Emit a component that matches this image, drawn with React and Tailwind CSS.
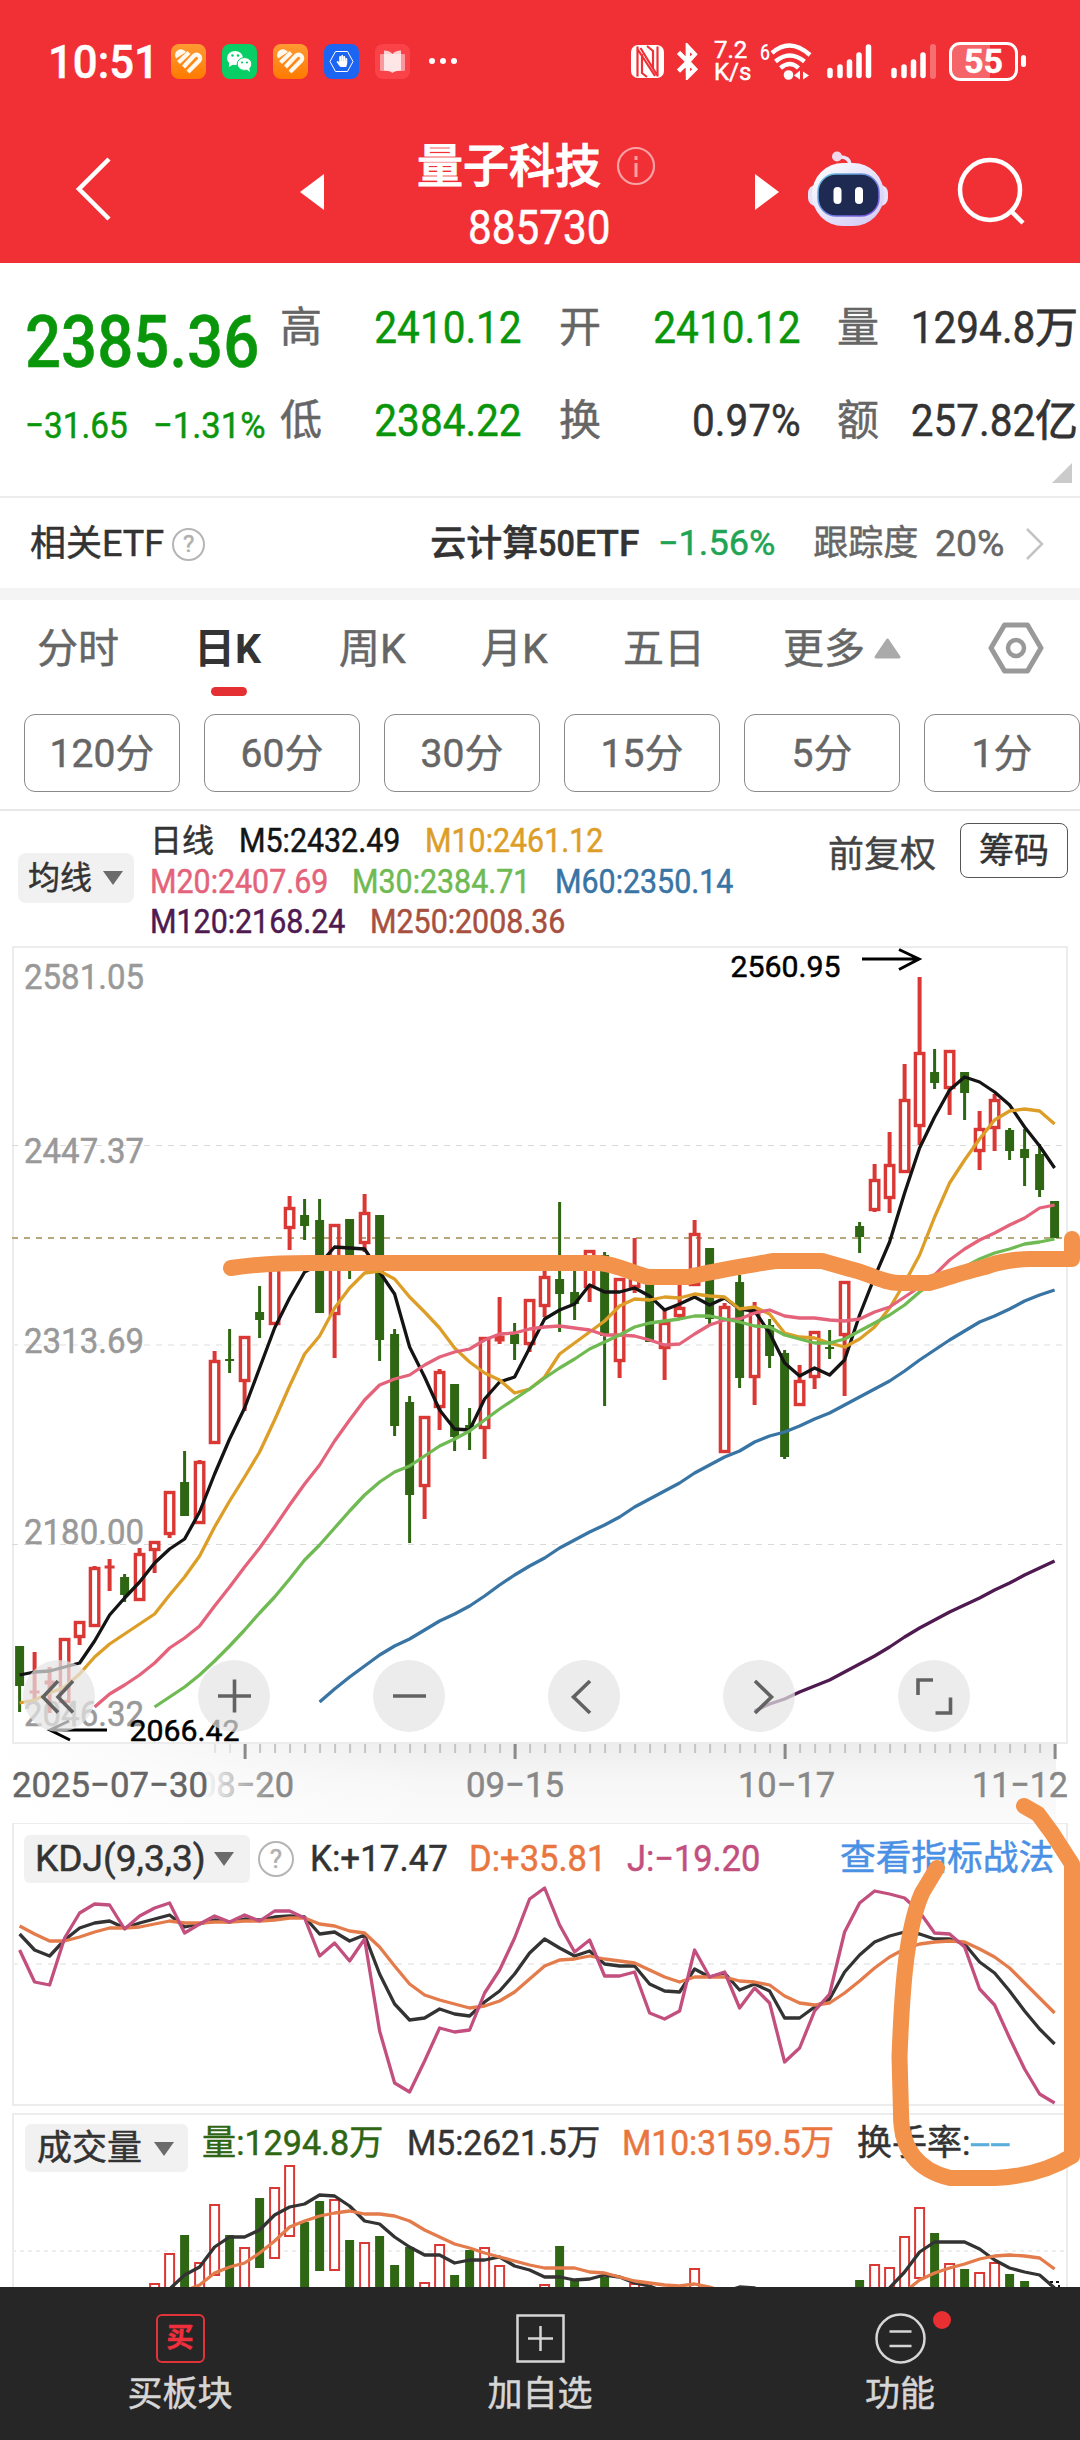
import { FaBluetoothB, FaHandPaper } from "react-icons/fa";

const FONT = "font-[Roboto,'Noto_Sans_CJK_SC',sans-serif]";
const RED = "#d93835";
const GREEN = "#2f6614";

const xAt = (index) => 19.6 + index * 15;

// [direction, body top, body bottom, high, low]
const candles = [
  ["d", 1646, 1686, 1646, 1712],
  ["u", 1691, 1693, 1652, 1700],
  ["u", 1681, 1684, 1667, 1713],
  ["u", 1638, 1703, 1638, 1703],
  ["u", 1621, 1638, 1621, 1645],
  ["u", 1567, 1627, 1566, 1627],
  ["u", 1566, 1568, 1559, 1591],
  ["d", 1577, 1595, 1574, 1602],
  ["u", 1553, 1601, 1548, 1601],
  ["u", 1541, 1551, 1541, 1573],
  ["u", 1491, 1535, 1491, 1538],
  ["d", 1482, 1516, 1451, 1516],
  ["u", 1461, 1524, 1460, 1524],
  ["u", 1360, 1444, 1351, 1444],
  ["d", 1359, 1361, 1329, 1373],
  ["u", 1336, 1382, 1336, 1411],
  ["d", 1312, 1320, 1286, 1338],
  ["u", 1268, 1325, 1268, 1325],
  ["u", 1207, 1229, 1196, 1250],
  ["d", 1215, 1226, 1199, 1240],
  ["d", 1220, 1313, 1199, 1313],
  ["u", 1224, 1315, 1224, 1358],
  ["d", 1219, 1268, 1219, 1279],
  ["u", 1212, 1244, 1194, 1252],
  ["d", 1215, 1340, 1215, 1361],
  ["d", 1334, 1426, 1329, 1436],
  ["d", 1402, 1495, 1396, 1543],
  ["u", 1416, 1487, 1416, 1519],
  ["u", 1371, 1408, 1369, 1430],
  ["d", 1384, 1437, 1384, 1451],
  ["d", 1425, 1428, 1408, 1450],
  ["u", 1337, 1429, 1337, 1459],
  ["u", 1336, 1341, 1297, 1344],
  ["d", 1334, 1344, 1323, 1360],
  ["u", 1299, 1345, 1299, 1352],
  ["u", 1276, 1307, 1265, 1317],
  ["d", 1279, 1294, 1202, 1332],
  ["d", 1292, 1304, 1265, 1320],
  ["u", 1250, 1288, 1250, 1302],
  ["d", 1255, 1336, 1252, 1406],
  ["u", 1278, 1362, 1278, 1378],
  ["u", 1270, 1288, 1238, 1293],
  ["d", 1275, 1342, 1275, 1342],
  ["u", 1322, 1349, 1310, 1380],
  ["u", 1307, 1317, 1285, 1318],
  ["u", 1233, 1286, 1220, 1286],
  ["d", 1248, 1319, 1248, 1326],
  ["u", 1306, 1453, 1303, 1453],
  ["d", 1282, 1378, 1275, 1388],
  ["u", 1310, 1378, 1302, 1405],
  ["d", 1325, 1356, 1319, 1368],
  ["d", 1353, 1457, 1350, 1459],
  ["u", 1380, 1406, 1365, 1406],
  ["u", 1331, 1378, 1331, 1389],
  ["d", 1347, 1349, 1330, 1359],
  ["u", 1281, 1336, 1281, 1396],
  ["d", 1226, 1237, 1222, 1253],
  ["u", 1179, 1211, 1164, 1212],
  ["u", 1164, 1199, 1132, 1213],
  ["u", 1099, 1173, 1064, 1173],
  ["u", 1052, 1127, 977, 1145],
  ["d", 1072, 1083, 1049, 1089],
  ["u", 1050, 1089, 1050, 1115],
  ["d", 1072, 1093, 1072, 1120],
  ["u", 1128, 1152, 1111, 1170],
  ["u", 1099, 1129, 1094, 1151],
  ["d", 1130, 1151, 1128, 1160],
  ["d", 1149, 1158, 1129, 1186],
  ["d", 1154, 1190, 1144, 1197],
  ["d", 1201, 1238, 1201, 1238],
];

const averages = [
  {
    color: "#3874a4",
    start: 20,
    values: [
      1702, 1689, 1677, 1666, 1655, 1646, 1639, 1630, 1621, 1614, 1606, 1596,
      1585, 1575, 1566, 1558, 1548, 1540, 1532, 1525, 1517, 1507, 1499, 1491,
      1483, 1473, 1465, 1457, 1451, 1442, 1436, 1432, 1426, 1419, 1413, 1405,
      1397, 1389, 1381, 1371, 1360, 1350, 1340, 1331, 1322, 1316, 1309, 1301,
      1295, 1290,
    ],
  },
  {
    color: "#4e1a50",
    start: 49,
    values: [
      1711, 1704, 1699, 1692, 1686, 1680, 1672, 1664, 1656, 1647, 1637, 1628,
      1620, 1612, 1605, 1598, 1590, 1583, 1575, 1568, 1561,
    ],
  },
  {
    color: "#141414",
    start: 0,
    values: [
      1675, 1672, 1671, 1667, 1663, 1641, 1615, 1598, 1582, 1563, 1549, 1539,
      1512, 1474, 1439, 1408, 1368, 1328, 1298, 1272, 1264, 1247, 1248, 1249,
      1272, 1294, 1347, 1377, 1410, 1429, 1430, 1399, 1382, 1377, 1348, 1319,
      1310, 1304, 1285, 1292, 1292, 1288, 1296, 1310, 1304, 1297, 1305, 1298,
      1309, 1311, 1333, 1363, 1376, 1368, 1375, 1360, 1315, 1277, 1242, 1193,
      1148, 1117, 1090, 1077, 1082, 1092, 1105, 1127, 1146, 1168,
    ],
  },
  {
    color: "#dd9e28",
    start: 0,
    values: [
      1703, 1700, 1693, 1687, 1674, 1657, 1644, 1634, 1624, 1614, 1595, 1577,
      1556, 1527, 1501, 1477, 1452, 1420, 1386, 1354, 1336, 1308, 1288, 1273,
      1271, 1279, 1297, 1312, 1328, 1348, 1362, 1373, 1380, 1393, 1389, 1377,
      1354, 1343, 1332, 1321, 1306, 1299, 1300, 1297, 1298, 1294, 1296, 1297,
      1309, 1307, 1314, 1333, 1337, 1338, 1343, 1347, 1339, 1327, 1308, 1283,
      1255, 1217, 1183, 1160, 1139, 1120, 1111, 1109, 1111, 1124,
    ],
  },
  {
    color: "#e4637a",
    start: 5,
    values: [
      1707, 1694, 1685, 1675, 1663, 1648, 1638, 1626, 1606, 1587, 1567, 1548,
      1527, 1505, 1484, 1465, 1441, 1420, 1400, 1385, 1379, 1375, 1365, 1357,
      1352, 1349, 1340, 1334, 1333, 1329, 1327, 1326, 1328, 1330, 1335, 1335,
      1336, 1340, 1345, 1344, 1334, 1325, 1320, 1319, 1313, 1310, 1316, 1318,
      1318, 1320, 1321, 1319, 1312, 1307, 1297, 1287, 1275, 1260, 1249, 1240,
      1233, 1225, 1218, 1208, 1205,
    ],
  },
  {
    color: "#6fba52",
    start: 9,
    values: [
      1707, 1697, 1687, 1675, 1661, 1646, 1630, 1613, 1597, 1579, 1560, 1545,
      1528, 1511, 1495, 1482, 1472, 1466, 1456, 1446, 1439, 1431, 1420, 1409,
      1399, 1389, 1378, 1368, 1359, 1349, 1342, 1335, 1327, 1323, 1321, 1319,
      1316, 1316, 1319, 1322, 1326, 1327, 1335, 1339, 1343, 1343, 1339, 1331,
      1323, 1315, 1305, 1292, 1282, 1273, 1267, 1259, 1253, 1249, 1244, 1242,
      1239,
    ],
  },
];

const kdjLines = [
  {
    color: "#333333",
    start: 0,
    values: [
      1934, 1950, 1956, 1940, 1928, 1923, 1921, 1928, 1923, 1919, 1915, 1927,
      1924, 1920, 1922, 1919, 1920, 1917, 1916, 1917, 1934, 1932, 1941, 1935,
      1974, 2004, 2020, 2018, 2009, 2014, 2016, 2002, 1991, 1974, 1953, 1939,
      1948, 1956, 1951, 1964, 1966, 1966, 1984, 1991, 1992, 1969, 1977, 1973,
      1990, 1984, 1991, 2018, 2018, 2007, 1999, 1972, 1955, 1942, 1936, 1932,
      1934, 1939, 1939, 1944, 1962, 1973, 1991, 2011, 2029, 2044,
    ],
  },
  {
    color: "#e47b4b",
    start: 0,
    values: [
      1926, 1934, 1941, 1941, 1937, 1932, 1928, 1928, 1927, 1924, 1921, 1923,
      1923, 1922, 1922, 1921, 1921, 1920, 1918, 1918, 1924, 1926, 1931, 1933,
      1947, 1966, 1984, 1995, 2000, 2004, 2008, 2006, 2001, 1992, 1979, 1966,
      1960, 1959, 1956, 1959, 1961, 1963, 1970, 1977, 1982, 1977, 1977, 1977,
      1981, 1982, 1985, 1996, 2003, 2005, 2003, 1993, 1981, 1968, 1957, 1949,
      1944, 1942, 1941, 1942, 1949, 1957, 1968, 1983, 1998, 2013,
    ],
  },
  {
    color: "#c34f7f",
    start: 0,
    values: [
      1950, 1982, 1985, 1938, 1913, 1904, 1905, 1929, 1916, 1908, 1903, 1933,
      1924, 1916, 1922, 1915, 1921, 1911, 1911, 1918, 1956, 1943, 1961, 1939,
      2031, 2083, 2092, 2061, 2028, 2032, 2030, 1993, 1970, 1938, 1899, 1888,
      1925, 1952, 1940, 1976, 1976, 1972, 2013, 2019, 2011, 1950, 1977, 1972,
      2008, 1988, 2003, 2062, 2048, 2011, 1994, 1932, 1903, 1891, 1894, 1898,
      1912, 1933, 1934, 1947, 1989, 2005, 2038, 2069, 2094, 2103,
    ],
  },
];

// [index, direction, top]
const volumeBars = [
  [9, "u", 2283],
  [10, "u", 2253],
  [11, "d", 2235],
  [12, "u", 2262],
  [13, "u", 2204],
  [14, "d", 2235],
  [15, "u", 2247],
  [16, "d", 2198],
  [17, "u", 2187],
  [18, "u", 2165],
  [19, "d", 2222],
  [20, "d", 2201],
  [21, "u", 2199],
  [22, "d", 2240],
  [23, "u", 2242],
  [24, "d", 2236],
  [25, "d", 2265],
  [26, "d", 2247],
  [27, "u", 2282],
  [28, "u", 2244],
  [29, "d", 2275],
  [30, "d", 2250],
  [31, "u", 2247],
  [32, "u", 2265],
  [35, "u", 2284],
  [36, "d", 2246],
  [37, "d", 2280],
  [39, "d", 2277],
  [41, "u", 2283],
  [45, "u", 2268],
  [56, "d", 2280],
  [57, "u", 2264],
  [58, "u", 2267],
  [59, "u", 2236],
  [60, "u", 2207],
  [61, "d", 2233],
  [62, "u", 2263],
  [63, "d", 2269],
  [64, "u", 2272],
  [65, "u", 2262],
  [66, "d", 2274],
  [67, "d", 2281],
];

const volumeLines = [
  {
    color: "#333333",
    start: 10,
    values: [
      2289, 2275, 2267, 2247, 2237, 2237, 2230, 2215, 2207, 2204, 2195, 2196,
      2206, 2221, 2224, 2237, 2247, 2255, 2255, 2263, 2260, 2260, 2257, 2266,
      2270, 2277, 2277, 2280, 2279, 2275, 2277, 2283, 2286, 2292, 2296, 2296,
      2296, 2292, 2287, 2288, 2293, 2300, 2304, 2304, 2304, 2304, 2304, 2302,
      2288, 2272, 2252, 2242, 2242, 2242, 2249, 2260, 2268, 2272, 2275, 2288,
    ],
  },
  {
    color: "#e47b4b",
    start: 11,
    values: [
      2291, 2285, 2273, 2267, 2263, 2253, 2241, 2227, 2221, 2216, 2213, 2211,
      2214, 2214, 2216, 2221, 2230, 2237, 2244, 2248, 2253, 2257, 2261, 2265,
      2268, 2268, 2268, 2272, 2273, 2277, 2281, 2283, 2285, 2286, 2284, 2287,
      2292, 2296, 2300, 2300, 2300, 2300, 2300, 2300, 2300, 2300, 2300, 2298,
      2292, 2280, 2273, 2268, 2264, 2259, 2256, 2255, 2256, 2258, 2269,
    ],
  },
];

const periods = ["120分", "60分", "30分", "15分", "5分", "1分"];

const tools = [
  { x: 59, d: "M58 1681l-15 16 15 15.500M73 1681l-15 16 15 15.500" },
  { x: 234, d: "M218 1696h33M234.500 1679.500v33" },
  { x: 409, d: "M393 1696h33" },
  { x: 584, d: "M590 1681l-16.500 16 16.500 16" },
  { x: 759, d: "M755 1681l16.500 16-16.500 16" },
  { x: 934, d: "M933 1680h-15v15M950.500 1697.500v15.500h-15" },
];

function toPoints({ start, values }) {
  return values.map((y, i) => `${xAt(start + i)},${y}`).join(" ");
}

function Din({ children, className = "", right = false, scale = "scale-x-[0.9]" }) {
  return (
    <span
      className={`flex shrink-0 whitespace-nowrap ${right ? "justify-end" : ""} ${className}`}
    >
      <span className={`${scale} ${right ? "origin-right" : "origin-left"}`}>
        {children}
      </span>
    </span>
  );
}

function Lines({ data, width = 3.3 }) {
  return data.map((line) => (
    <polyline
      key={line.color}
      points={toPoints(line)}
      fill="none"
      stroke={line.color}
      strokeWidth={width}
      strokeLinejoin="round"
    />
  ));
}

function Candle({ index, candle }) {
  const [direction, top, bottom, high, low] = candle;
  const x = xAt(index);
  const height = bottom - top;

  if (direction === "d") {
    return (
      <g fill={GREEN}>
        <rect x={x - 1.5} y={high} width="3" height={low - high} />
        <rect x={x - 4.5} y={top} width="9" height={height} />
      </g>
    );
  }

  return (
    <g fill={RED}>
      <rect x={x - 2} y={high} width="4" height={Math.max(top - high, 0)} />
      <rect x={x - 2} y={bottom} width="4" height={Math.max(low - bottom, 0)} />
      {height < 7 ? (
        <rect x={x - 5} y={top - 0.5} width="10" height={height + 1} />
      ) : (
        <rect
          x={x - 4.2}
          y={top + 1.5}
          width="8.4"
          height={height - 3}
          fill="none"
          stroke={RED}
          strokeWidth="3.400"
        />
      )}
    </g>
  );
}

function HeartIcon() {
  return (
    <svg className="size-[35px] shrink-0" viewBox="0 0 35 35">
      <defs>
        <linearGradient id="heart" x1="0" y1="0" x2="0" y2="1">
          <stop offset="0" stopColor="#ff9a33" />
          <stop offset="1" stopColor="#ff7a00" />
        </linearGradient>
      </defs>
      <rect width="35" height="35" rx="8" fill="url(#heart)" />
      <path d="M5 14.500a5.800 5.800 0 0 1 10-6.500z" fill="#fff8ef" />
      <g fill="none" stroke="#fff8ef" strokeWidth="4.200">
        <path d="M7.500 18.500L18 8.500" />
        <path d="M12.500 23L23 11.800a3.600 3.600 0 0 1 5.200 5L17 28" />
      </g>
    </svg>
  );
}

function StatusBar() {
  return (
    <div className="flex h-[122px] items-center pl-[48px]">
      <Din className="w-[123px] text-[47px] leading-none font-medium" scale="scale-x-[0.93]">
        10:51
      </Din>
      <div className="flex items-center gap-4">
        <HeartIcon />
        <svg className="size-[35px]" viewBox="0 0 35 35">
          <rect width="35" height="35" rx="8" fill="#07cf66" />
          <ellipse cx="13" cy="14" rx="8" ry="7" fill="#fff" />
          <path d="M7 18l0 5 5-3z" fill="#fff" />
          <ellipse cx="22.500" cy="20" rx="7.300" ry="6.400" fill="#fff" stroke="#07cf66" />
          <path d="M24 25l4 3-1-5z" fill="#fff" />
          <g fill="#07cf66">
            <circle cx="10.500" cy="11.500" r="1.300" />
            <circle cx="16" cy="11.500" r="1.300" />
            <circle cx="20" cy="18.500" r="1.100" />
            <circle cx="25" cy="18.500" r="1.100" />
          </g>
        </svg>
        <HeartIcon />
        <div className="relative flex size-[35px] items-center justify-center rounded-lg bg-[#1c65f2]">
          <svg className="absolute inset-0" viewBox="0 0 35 35">
            <path
              d="M11.500 7.500h12l5.500 10-5.500 10h-12L6 17.500z"
              fill="none"
              stroke="#fff"
            />
          </svg>
          <FaHandPaper className="size-[12px]" />
        </div>
        <svg className="size-[35px]" viewBox="0 0 35 35">
          <rect width="35" height="35" rx="8" fill="#fa4249" />
          <rect x="5" y="10" width="25" height="17" rx="1" fill="#fff" opacity="0.45" />
          <path d="M9 6.500q6 0 8.500 3.500 2.500-3.500 8.500-3.500v20q-6 0-8.500 2.500-2.500-2.500-8.500-2.500z" fill="#fff" opacity="0.75" />
        </svg>
      </div>
      <div className="ml-[19px] flex gap-[5px]">
        <i className="size-1.5 rounded-full bg-white" />
        <i className="size-1.5 rounded-full bg-white" />
        <i className="size-1.5 rounded-full bg-white" />
      </div>

      <svg className="ml-[174px] h-[33px] w-[33px] shrink-0" viewBox="0 0 33 33">
        <rect width="33" height="33" rx="7" fill="#fff" />
        <path
          d="M6.500 1.500v30M26.500 1.500v30M6.500 4L24 31M9.500 3L26 30M11 9v19l5 4M22 24V6l-6-5"
          fill="none"
          stroke="#f13036"
          strokeWidth="2.200"
        />
      </svg>
      <FaBluetoothB className="ml-[9px] h-[37px] w-[29px] shrink-0 stroke-white stroke-[18px]" />
      <div className="ml-[12px] w-[46px] shrink-0 text-[24px] leading-[22px] whitespace-nowrap">
        <p>7.2</p>
        <p>K/s</p>
      </div>
      <svg className="h-[40px] w-[52px] shrink-0 overflow-visible" viewBox="0 0 52 40">
        <text x="0" y="19" fontSize="22" fontWeight="500" fill="#fff" textLength="10" lengthAdjust="spacingAndGlyphs">
          6
        </text>
        <g fill="none" stroke="#fff" strokeWidth="4.400">
          <path d="M12 12q18-16 38 2" />
          <path d="M15.500 20.500q14-12 29 0" />
          <path d="M20.500 27q9.500-8 18 0" />
        </g>
        <circle cx="28.500" cy="34" r="4.800" fill="#fff" />
        <path d="M40 29.500v9l-6-4zM43 30.500l6 4-6 4z" fill="#fff" />
      </svg>
      <svg className="ml-[10px] h-[36px] w-[110px] shrink-0" viewBox="0 0 110 36">
        <g stroke="#fff" strokeWidth="5.500" strokeLinecap="round">
          <path d="M8 27.500v5M18 24v8.500M27.500 19v13.500M37 12v20.500M46.500 4v28.500" />
          <path d="M72 27.500v5M82 24v8.500M91.500 19v13.500M101 12v20.500" />
        </g>
      </svg>
      <i className="-ml-[2px] h-[35px] w-[6px] shrink-0 rounded-full bg-white/30" />
      <div className="ml-[13px] flex h-[39px] w-[69px] shrink-0 items-center justify-center rounded-[11px] border-[3px] border-white bg-linear-to-r from-white/25 from-60% to-transparent to-60% text-[34px] leading-none font-bold">
        55
      </div>
      <i className="ml-[3px] h-3 w-[5px] shrink-0 rounded-full bg-white" />
    </div>
  );
}

function Robot() {
  return (
    <svg className="h-[78px] w-[84px]" viewBox="0 0 84 78">
      <defs>
        <linearGradient id="shell" x1="0" y1="0" x2="1" y2="1">
          <stop offset="0" stopColor="#ffffff" />
          <stop offset="1" stopColor="#cfc8f5" />
        </linearGradient>
        <linearGradient id="rim" x1="0" y1="0" x2="1" y2="1">
          <stop offset="0" stopColor="#65c4dc" />
          <stop offset="1" stopColor="#7b4be0" />
        </linearGradient>
      </defs>
      <rect x="2" y="35" width="80" height="21" rx="8" fill="#e7e2fa" />
      <path d="M32 7q12-1 12 9" fill="none" stroke="#ece4fa" strokeWidth="3.500" />
      <circle cx="31" cy="6.500" r="5" fill="#f0d8ea" />
      <rect x="6" y="13" width="72" height="63" rx="31" fill="url(#shell)" />
      <rect x="12" y="24" width="61" height="42" rx="18" fill="#1e2a52" stroke="url(#rim)" strokeWidth="1.500" />
      <rect x="27.500" y="37" width="8" height="17" rx="4" fill="#fff" />
      <rect x="49" y="37" width="8" height="17" rx="4" fill="#fff" />
    </svg>
  );
}

function TopBar() {
  return (
    <div className="flex h-[141px] items-start">
      <svg className="mt-[34px] ml-[74px] h-[66px] w-[40px]" viewBox="0 0 40 66">
        <path d="M35 3L5 33l30 30" fill="none" stroke="#fff" strokeWidth="4.500" />
      </svg>
      <svg className="mt-[52px] ml-[186px] h-[36px] w-[24px]" viewBox="0 0 24 36">
        <path d="M24 0v36L0 18z" fill="#fff" />
      </svg>
      <div className="ml-[93px] w-[326px] pt-[18px]">
        <div className="flex items-center">
          <h1 className="text-[46px] leading-[52px] font-medium [-webkit-text-stroke:1px]">量子科技</h1>
          <svg className="ml-[15px] size-[40px]" viewBox="0 0 40 40" stroke="#fff" fill="none" opacity="0.55">
            <circle cx="20" cy="20" r="18" strokeWidth="2.200" />
            <path d="M20 17v14M20 10v4" strokeWidth="3" />
          </svg>
        </div>
        <Din className="mt-[10px] ml-[51px] w-[142px] text-[48px] leading-[52px]" scale="scale-x-[0.88]">
          885730
        </Din>
      </div>
      <svg className="mt-[52px] ml-[12px] h-[36px] w-[24px]" viewBox="0 0 24 36">
        <path d="M0 0v36l24-18z" fill="#fff" />
      </svg>
      <div className="mt-[28px] ml-[27px]">
        <Robot />
      </div>
      <svg className="mt-[34px] ml-[66px] size-[70px]" viewBox="0 0 70 70" fill="none" stroke="#fff" strokeWidth="4.500">
        <circle cx="34" cy="34" r="30" />
        <path d="M55 55l12 12" />
      </svg>
    </div>
  );
}

function QuoteCell({ label, value, unit, tone = "", labelClass = "", valueClass }) {
  return (
    <div className="flex items-center">
      <span className={`text-[42px] leading-[60px] text-[#666] ${labelClass}`}>
        {label}
      </span>
      <Din
        right
        scale="scale-x-[0.9]"
        className={`text-[45px] leading-[60px] ${tone} ${valueClass}`}
      >
        {value}
      </Din>
      {unit && (
        <span className="w-[46px] shrink-0 text-[43px] leading-[60px] text-[#333] [-webkit-text-stroke:0.8px]">
          {unit}
        </span>
      )}
    </div>
  );
}

function QuotePanel() {
  return (
    <section className="relative flex h-[235px] border-b-2 border-[#ececec] text-[#0a960a]">
      <div className="w-[280px] shrink-0 pt-[41px] pl-[25px]">
        <Din className="text-[73px] leading-[76px] font-medium" scale="scale-x-[0.87]">
          2385.36
        </Din>
        <div className="mt-[26px] flex text-[37px] leading-[40px]">
          <Din className="w-[128px]">−31.65</Din>
          <Din scale="scale-x-[0.935]">−1.31%</Din>
        </div>
      </div>
      <div className="shrink-0 pt-[35px]">
        <div className="flex">
          <QuoteCell label="高" value="2410.12" valueClass="w-[200px]" />
          <QuoteCell label="开" value="2410.12" labelClass="pl-[37px]" valueClass="w-[200px]" />
          <QuoteCell label="量" value="1294.8" unit="万" labelClass="pl-[36px]" valueClass="w-[156px]" tone="text-[#333]" />
        </div>
        <div className="mt-[33px] flex">
          <QuoteCell label="低" value="2384.22" valueClass="w-[200px]" />
          <QuoteCell label="换" value="0.97%" labelClass="pl-[37px]" valueClass="w-[200px]" tone="text-[#333]" />
          <QuoteCell label="额" value="257.82" unit="亿" labelClass="pl-[36px]" valueClass="w-[156px]" tone="text-[#333]" />
        </div>
      </div>
      <svg className="absolute right-[8px] bottom-[13px] size-[20px]" viewBox="0 0 20 20">
        <path d="M20 0v20H0z" fill="#cbcbcb" />
      </svg>
    </section>
  );
}

function HelpIcon({ className }) {
  return (
    <span
      className={`flex shrink-0 items-center justify-center rounded-full border-2 border-[#b5b5b5] leading-none text-[#b0b0b0] ${className}`}
    >
      ?
    </span>
  );
}

function EtfRow() {
  return (
    <section className="flex h-[90px] items-center pt-[2px] pl-[30px] text-[36px] text-[#333]">
      <span>相关ETF</span>
      <HelpIcon className="ml-[8px] size-[33px] text-[24px]" />
      <span className="ml-[225px] font-medium">云计算</span>
      <Din className="w-[37px] font-medium" scale="scale-x-[0.9]">50</Din>
      <Din className="w-[65px] font-medium" scale="scale-x-[1.03]">ETF</Din>
      <Din className="ml-[18px] w-[119px] text-[35px] text-[#1fa455]" scale="scale-x-[1.03]">
        −1.56%
      </Din>
      <span className="ml-[36px] text-[35px] text-[#666]">跟踪度</span>
      <Din className="ml-[17px] w-[70px] text-[36px] text-[#666]" scale="scale-x-[1.04]">20%</Din>
      <svg className="ml-[20px] h-[32px] w-[20px]" viewBox="0 0 20 32">
        <path d="M2 1l15 15L2 31" fill="none" stroke="#c4c4c4" strokeWidth="2.500" />
      </svg>
    </section>
  );
}

function ChartTabs() {
  return (
    <nav className="flex h-[98px] pt-[19px] pl-[37px] text-[41px] leading-[60px] whitespace-nowrap text-[#666]">
      <span className="w-[157px]">分时</span>
      <div className="w-[145px]">
        <p className="font-bold text-[#333] [-webkit-text-stroke:0]">日K</p>
        <div className="mt-[8px] ml-[17px] h-[9px] w-[36px] rounded-full bg-[#e53033]" />
      </div>
      <span className="w-[142px]">周K</span>
      <span className="w-[142px]">月K</span>
      <span className="w-[160px]">五日</span>
      <span>更多</span>
      <svg className="mt-[19px] ml-[9px] h-[21px] w-[27px]" viewBox="0 0 27 21">
        <path d="M13.500 2L25 19H2z" fill="#aaa" stroke="#aaa" strokeWidth="3" strokeLinejoin="round" />
      </svg>
      <svg className="mt-[2px] ml-[87px] h-[54px] w-[56px]" viewBox="0 0 56 54" fill="none" stroke="#999" strokeWidth="5">
        <path d="M16.500 4h23L53 27 39.500 50h-23L3 27z" strokeLinejoin="round" />
        <circle cx="28" cy="27" r="8" strokeWidth="4.500" />
      </svg>
    </nav>
  );
}

function PeriodRow() {
  return (
    <div className="flex h-[113px] gap-6 border-b-2 border-[#e8e8e8] pt-4 pl-6">
      {periods.map((label) => (
        <button
          key={label}
          type="button"
          className="flex h-[78px] w-[156px] shrink-0 items-center justify-center rounded-[11px] border border-[#8a8a8a] pt-[2px] text-[39px] text-[#666]"
        >
          <span>{label}</span>
        </button>
      ))}
    </div>
  );
}

function Caret({ className = "" }) {
  return (
    <svg className={`h-[14px] w-[20px] shrink-0 ${className}`} viewBox="0 0 20 14">
      <path d="M0 0h20L10 14z" fill="#6b6b6b" />
    </svg>
  );
}

function AverageLegend() {
  return (
    <section className="flex h-[129px] pl-[18px] text-[#333]">
      <button
        type="button"
        className="mt-[42px] flex h-[50px] w-[116px] items-center rounded-lg bg-[#f1f1f1] pl-[10px] text-[32px]"
      >
        均线
        <Caret className="ml-[11px]" />
      </button>
      <div className="w-[677px] pt-[10px] pl-[16px] text-[33px] leading-[40.500px]">
        <div className="flex">
          <span className="w-[89px] text-[32px]">日线</span>
          <Din className="w-[186px] text-[#141414]" scale="scale-x-[0.92]">M5:2432.49</Din>
          <Din className="text-[#dd9e28]" scale="scale-x-[0.92]">M10:2461.12</Din>
        </div>
        <div className="flex">
          <Din className="w-[202px] text-[#e4637a]" scale="scale-x-[0.92]">M20:2407.69</Din>
          <Din className="w-[203px] text-[#6fba52]" scale="scale-x-[0.92]">M30:2384.71</Din>
          <Din className="text-[#3874a4]" scale="scale-x-[0.92]">M60:2350.14</Din>
        </div>
        <div className="flex">
          <Din className="w-[220px] text-[#4e1a50]" scale="scale-x-[0.92]">M120:2168.24</Din>
          <Din className="text-[#a85040]" scale="scale-x-[0.92]">M250:2008.36</Din>
        </div>
      </div>
      <span className="mt-[18px] ml-[17px] w-[132px] text-[36px] leading-[52px] text-[#444]">前复权</span>
      <button
        type="button"
        className="mt-[12px] h-[55px] w-[108px] rounded-lg border-[1.500px] border-[#555] pt-[2px] text-[35px] leading-none"
      >
        筹码
      </button>
    </section>
  );
}

function FitText({ x, y, w, children, size = 35.5, fill = "#999" }) {
  return (
    <text
      x={x}
      y={y}
      fontSize={size}
      fill={fill}
      stroke={fill}
      strokeWidth="0.500"
      textLength={w}
      lengthAdjust="spacingAndGlyphs"
    >
      {children}
    </text>
  );
}

function PriceChart() {
  return (
    <svg className="block h-[883px] w-full" viewBox="0 940 1080 883">
      <defs>
        <linearGradient id="axis" x1="0" y1="0" x2="0" y2="1">
          <stop offset="0" stopColor="#ededed" />
          <stop offset="0.5" stopColor="#f7f7f7" />
          <stop offset="1" stopColor="#fbfbfb" />
        </linearGradient>
        <linearGradient id="fade" gradientUnits="userSpaceOnUse" x1="0" y1="0" x2="440" y2="0">
          <stop offset="0" stopColor="#fff" />
          <stop offset="1" stopColor="#fff" stopOpacity="0" />
        </linearGradient>
        <linearGradient id="date" gradientUnits="userSpaceOnUse" x1="204" y1="0" x2="275" y2="0">
          <stop offset="0" stopColor="#888" stopOpacity="0" />
          <stop offset="1" stopColor="#888" />
        </linearGradient>
      </defs>

      <rect x="0" y="1743" width="1056" height="80" fill="url(#axis)" />
      <rect x="0" y="1743" width="440" height="80" fill="url(#fade)" />
      <rect x="13" y="947" width="1054" height="796" fill="none" stroke="#ececec" strokeWidth="2" />

      <path d="M12 1145.500h1055M12 1544.500h1055" stroke="#d9d9d9" strokeDasharray="6 6" />
      <path d="M12 1345h1055" stroke="#eee" strokeWidth="2" strokeDasharray="6 6" />
      <path d="M12 1238h1055" stroke="#b7a77c" strokeWidth="1.800" strokeDasharray="6 6" />

      <FitText x="24" y="989" w="120">2581.05</FitText>
      <FitText x="24" y="1163" w="120">2447.37</FitText>
      <FitText x="24" y="1353" w="120">2313.69</FitText>
      <FitText x="24" y="1544" w="120">2180.00</FitText>
      <FitText x="24" y="1726" w="120">2046.32</FitText>

      {candles.map((candle, index) => (
        <Candle key={index} index={index} candle={candle} />
      ))}
      <Lines data={averages} />

      <g fill="none" stroke="#000" strokeWidth="3">
        <path d="M862 959h57M899 949.500l20 9.500-20 10.500" />
        <path d="M107 1730H50M69 1721l-19 9 20 10" />
      </g>
      <FitText x="730.500" y="977" w="110" size={30} fill="#000">2560.95</FitText>
      <FitText x="129.500" y="1741" w="110" size={30} fill="#000">2066.42</FitText>

      {tools.map((tool) => (
        <g key={tool.x}>
          <circle cx={tool.x} cy="1696" r="36" fill="#e4e4e4" fillOpacity="0.715" />
          <path d={tool.d} fill="none" stroke="#626262" strokeWidth="3.600" />
        </g>
      ))}

      {Array.from({ length: 57 }, (_, i) => i + 13).map((index) => {
        const major = [15, 33, 51, 69].includes(index);
        return (
          <rect
            key={index}
            x={xAt(index) - (major ? 1 : 0.5)}
            y="1744"
            width={major ? 3 : 2}
            height={major ? 15 : 9}
            fill={major ? "#8a8a8a" : "#c4c4c4"}
            opacity={index < 15 ? 0.4 : 1}
          />
        );
      })}

      <FitText x="197" y="1797" w="97" fill="url(#date)">08−20</FitText>
      <FitText x="12" y="1797" w="196" fill="#666">2025−07−30</FitText>
      <FitText x="466" y="1797" w="98" fill="#888">09−15</FitText>
      <FitText x="738" y="1797" w="97" fill="#888">10−17</FitText>
      <FitText x="972" y="1797" w="96" fill="#888">11−12</FitText>
    </svg>
  );
}

function KdjPanel() {
  return (
    <section className="relative h-[290px]">
      <svg className="absolute inset-0" viewBox="0 1823 1080 290">
        <rect x="13" y="1823" width="1054" height="282" fill="none" stroke="#ececec" strokeWidth="2" />
        <path d="M12 1964h1055" stroke="#eee" strokeWidth="2" strokeDasharray="6 6" />
        <Lines data={kdjLines} />
      </svg>
      <div className="relative flex h-[71px] items-center pl-[24px] text-[36px] text-[#333]">
        <button type="button" className="flex h-[48px] w-[226px] items-center rounded-md bg-[#f1f1f1] pl-[11px]">
          <Din className="w-[179px]" scale="scale-x-[1.03]">KDJ(9,3,3)</Din>
          <Caret />
        </button>
        <HelpIcon className="ml-[8px] size-[36px] text-[26px]" />
        <Din className="ml-[16px] w-[159px]" scale="scale-x-[0.97]">K:+17.47</Din>
        <Din className="w-[158px] text-[#e9763f]" scale="scale-x-[0.96]">D:+35.81</Din>
        <Din className="w-[213px] text-[#c34f7f]" scale="scale-x-[0.955]">J:−19.20</Din>
        <a className="text-[35.700px] whitespace-nowrap text-[#4a91e6]">查看指标战法</a>
      </div>
    </section>
  );
}

function VolumePanel() {
  return (
    <section className="relative h-[174px] overflow-hidden">
      <svg className="absolute inset-0" viewBox="0 2113 1080 174">
        <path d="M13 2300V2114h1054v186" fill="none" stroke="#ececec" strokeWidth="2" />
        <path d="M12 2251h1055" stroke="#eee" strokeWidth="2" strokeDasharray="4 4" />
        {volumeBars.map(([index, direction, top]) =>
          direction === "d" ? (
            <rect key={index} x={xAt(index) - 4.5} y={top} width="9" height="70" fill={GREEN} />
          ) : (
            <rect
              key={index}
              x={xAt(index) - 4.5}
              y={top + 1}
              width="9"
              height="70"
              fill="#fff"
              stroke={RED}
              strokeWidth="2"
            />
          ),
        )}
        <rect x="1050" y="2282" width="9" height="20" fill="#fff" stroke="#111" strokeWidth="2" strokeDasharray="3 3" />
        <Lines data={volumeLines} />
      </svg>
      <div className="relative flex pt-[11px] pl-[25px] text-[35px] text-[#333]">
        <button type="button" className="flex h-[48px] w-[163px] items-center rounded-md bg-[#f1f1f1] pt-[2px] pl-[12px]">
          成交量
          <Caret className="ml-[12px]" />
        </button>
        <div className="ml-[14px] flex pt-[2px] leading-[36px] whitespace-nowrap">
          <Din className="w-[205px] text-[#2f6614]" scale="scale-x-[0.975]">量:1294.8万</Din>
          <Din className="w-[215px]" scale="scale-x-[0.96]">M5:2621.5万</Din>
          <Din className="w-[235px] text-[#e9763f]" scale="scale-x-[0.96]">M10:3159.5万</Din>
          <span>换手率:</span>
          <span className="origin-left scale-x-[2.100] text-[#5aaedb]">--</span>
        </div>
      </div>
    </section>
  );
}

function BottomNav() {
  return (
    <nav className="grid h-[153px] grid-cols-3 bg-[#262626] text-[35px] text-[#d6d6d6]">
      <div className="flex flex-col items-center pt-[27px]">
        <span className="flex size-[49px] items-center justify-center rounded-md border-[2.500px] border-[#e0333a] text-[27px] leading-none font-bold text-[#f02f3c]">
          买
        </span>
        <span className="mt-[12px] leading-[40px]">买板块</span>
      </div>
      <div className="flex flex-col items-center pt-[27px]">
        <svg className="size-[49px]" viewBox="0 0 49 49" fill="none" stroke="#d6d6d6" strokeWidth="2.500">
          <rect x="1.500" y="1.500" width="46" height="46" />
          <path d="M24.500 12v25M12 24.500h25" />
        </svg>
        <span className="mt-[12px] leading-[40px]">加自选</span>
      </div>
      <div className="flex flex-col items-center pt-[26px]">
        <div className="relative">
          <svg className="size-[51px]" viewBox="0 0 51 51" fill="none" stroke="#d6d6d6" strokeWidth="2.500">
            <circle cx="25.500" cy="25.500" r="24" />
            <path d="M14.500 18.500h22M14.500 33h22" />
          </svg>
          <i className="absolute -top-[2px] left-[58px] size-[18px] rounded-full bg-[#ea2f32]" />
        </div>
        <span className="mt-[11px] leading-[40px]">功能</span>
      </div>
    </nav>
  );
}

// Hand-drawn marker strokes across the charts.
function Annotations() {
  return (
    <svg
      className="pointer-events-none absolute inset-0 h-[2440px] w-[1080px]"
      viewBox="0 0 1080 2440"
      fill="none"
      stroke="#f3924b"
      strokeWidth="16"
      strokeLinecap="round"
      strokeLinejoin="round"
    >
      <path d="M231 1268Q262 1263 310 1263H600C618 1265 632 1273 648 1277H688C718 1270 745 1266 774 1261H822L850 1269C872 1274 882 1283 900 1283H929C948 1278 966 1271 985 1267C1000 1261 1020 1259 1030 1259H1072V1239" />
      <path d="M1024 1806L1038 1814L1052 1833L1072 1864V2156Q1040 2176 995 2178H950Q900 2166 901 2112L899.500 2057C902 1990 906 1930 922 1893L937 1868" />
    </svg>
  );
}

function App() {
  return (
    <main
      className={`relative h-[2440px] w-[1080px] overflow-hidden bg-white [-webkit-text-stroke:0.5px] ${FONT}`}
    >
      <header className="h-[263px] bg-[#f13036] text-white">
        <StatusBar />
        <TopBar />
      </header>
      <QuotePanel />
      <EtfRow />
      <div className="h-3 bg-[#f4f4f4]" />
      <ChartTabs />
      <PeriodRow />
      <AverageLegend />
      <PriceChart />
      <KdjPanel />
      <VolumePanel />
      <BottomNav />
      <Annotations />
    </main>
  );
}

export default App;
